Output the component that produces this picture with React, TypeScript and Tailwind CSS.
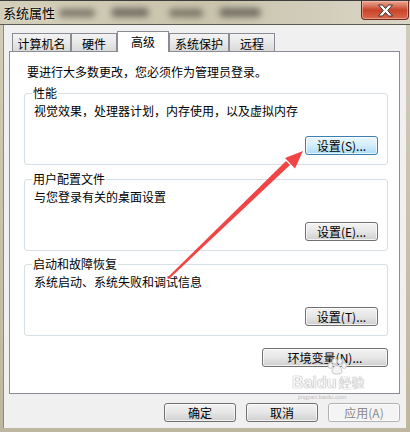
import React from "react";

const FONT = { fontFamily: '"Noto Sans CJK SC", "Noto Sans", sans-serif' };
const MARK = { fontFamily: '"Liberation Sans", "Noto Sans CJK SC", sans-serif' };

type BtnProps = {
  label: string;
  w: string;
  focused?: boolean;
  disabled?: boolean;
};

const Btn = ({ label, w, focused, disabled }: BtnProps) => {
  let look =
    "border-[#707070] bg-linear-to-b from-[#f3f3f3] via-[#e6e6e6] to-[#cfcfcf] text-black";
  if (focused)
    look =
      "border-[#3c7fb1] bg-linear-to-b from-[#ecf7fd] via-[#d3eefb] to-[#a9dbf6] text-black";
  if (disabled) look = "border-[#adb2b5] bg-[#f4f4f4] text-[#8a8a8a]";
  return (
    <div
      className={`${w} flex h-[19px] items-center justify-center rounded-[3px] border text-[12px] leading-none shadow-[inset_0_0_0_1px_rgba(255,255,255,0.7)] ${look}`}
    >
      {label}
    </div>
  );
};

const Group = ({
  title,
  text,
  btn,
  mt,
}: {
  title: string;
  text: string;
  btn: React.ReactNode;
  mt: string;
}) => (
  <fieldset
    className={`${mt} ml-[14px] w-[364px] rounded-[3px] border border-[#d5dfe5] px-[9px] pb-[9px]`}
  >
    <legend className="-ml-[2px] h-[16px] px-[1px] text-[12px] leading-[16px]">
      {title}
    </legend>
    <div className="mt-[2px] h-[16px] text-[12px] leading-[16px]">{text}</div>
    <div className="mt-[17px] flex justify-end">{btn}</div>
  </fieldset>
);

const tabs = [
  { name: "计算机名", w: "w-[59px]" },
  { name: "硬件", w: "w-[46px]" },
  { name: "高级", w: "w-[52px]", active: true },
  { name: "系统保护", w: "w-[60px]" },
  { name: "远程", w: "w-[46px]" },
];

export default function App() {
  return (
    <div
      className="relative flex h-[432px] w-[410px] flex-col overflow-hidden bg-linear-to-b from-[#d2cdb8] to-[#bdb7a0] text-black"
      style={FONT}
    >
      {/* title bar */}
      <div className="flex h-[25px] shrink-0 justify-between border-t border-b border-t-[#3d3d3d] border-b-[#5c5a52] bg-linear-to-r from-[#d4cfba] via-[#c9c3ab] to-[#dad6c8]">
        <div className="flex items-center">
          <span className="pl-[3px] text-[13px] leading-none [text-shadow:0_0_3px_#f4f1e6]">
            系统属性
          </span>
          <span className="ml-[4px] h-[8px] w-[36px] rounded-full bg-[#5f5b50] opacity-75 blur-[3px]" />
          <span className="ml-[16px] h-[9px] w-[38px] rounded-full bg-[#55524a] opacity-75 blur-[3px]" />
          <span className="ml-[20px] h-[8px] w-[34px] rounded-full bg-[#5f5b50] opacity-75 blur-[3px]" />
          <span className="ml-[16px] h-[9px] w-[42px] rounded-full bg-[#55524a] opacity-75 blur-[3px]" />
        </div>
        <div className="mr-[1px] flex h-[19px] w-[48px] items-center justify-center rounded-b-[4px] border border-t-0 border-[#6e2a1e] bg-linear-to-b from-[#e9a894] via-[#c8432a] to-[#d9684c] shadow-[inset_0_0_0_1px_rgba(255,200,180,0.5)]">
          <svg width="17" height="13" viewBox="0 0 17 13">
            <path
              d="M1.5 1 L5.5 1 L8.5 4.5 L11.5 1 L15.5 1 L10.8 6.5 L15.5 12 L11.5 12 L8.5 8.5 L5.5 12 L1.5 12 L6.2 6.5 Z"
              fill="#ffffff"
              stroke="#3f3431"
              strokeWidth="1"
              strokeLinejoin="round"
            />
          </svg>
        </div>
      </div>

      {/* dialog body */}
      <div className="mb-[4px] ml-[3px] mr-[4px] flex flex-1 flex-col border-l border-[#8f8a78] bg-[#f0f0f0]">
        {/* tabs */}
        <div className="flex h-[26px] items-end pl-[8px] pt-[6px]">
          {tabs.map((t) =>
            t.active ? (
              <div
                key={t.name}
                className={`${t.w} relative z-10 -mb-[1px] flex h-[21px] justify-center border border-b-0 border-[#898c95] bg-white pt-[2px] text-[12px] leading-[16px]`}
              >
                {t.name}
              </div>
            ) : (
              <div
                key={t.name}
                className={`${t.w} flex h-[18px] justify-center border border-b-0 border-[#898c95] bg-linear-to-b from-[#f3f3f3] via-[#e9e9e9] to-[#d9d9d9] pt-[2px] text-[12px] leading-[15px]`}
              >
                {t.name}
              </div>
            )
          )}
        </div>

        {/* panel */}
        <div className="ml-[5px] flex h-[343px] w-[391px] flex-col border border-[#898c95] bg-white pt-[12px]">
          <div className="h-[16px] pl-[17px] text-[12px] leading-[16px]">
            要进行大多数更改，您必须作为管理员登录。
          </div>
          <Group
            mt="mt-[5px]"
            title="性能"
            text="视觉效果，处理器计划，内存使用，以及虚拟内存"
            btn={<Btn label="设置(S)..." w="w-[73px]" focused />}
          />
          <Group
            mt="mt-[6px]"
            title="用户配置文件"
            text="与您登录有关的桌面设置"
            btn={<Btn label="设置(E)..." w="w-[73px]" />}
          />
          <Group
            mt="mt-[5px]"
            title="启动和故障恢复"
            text="系统启动、系统失败和调试信息"
            btn={<Btn label="设置(T)..." w="w-[73px]" />}
          />
          <div className="mt-[12px] flex justify-end pr-[11px]">
            <Btn label="环境变量(N)..." w="w-[126px]" />
          </div>
        </div>

        {/* footer buttons */}
        <div className="mt-[9px] flex justify-end gap-[10px] pr-[6px]">
          <Btn label="确定" w="w-[72px]" />
          <Btn label="取消" w="w-[72px]" />
          <Btn label="应用(A)" w="w-[72px]" disabled />
        </div>
      </div>

      {/* watermark */}
      <div
        className="pointer-events-none absolute left-[292px] top-[358px] flex flex-col items-start"
        style={MARK}
      >
        <svg className="ml-[34px]" width="22" height="17" viewBox="0 0 22 18">
          <g fill="#f4f4f4" stroke="#c4c4c4" strokeWidth="1">
            <ellipse cx="4" cy="8" rx="2.5" ry="3" />
            <ellipse cx="8.5" cy="3.5" rx="2.5" ry="3" />
            <ellipse cx="14" cy="3.5" rx="2.5" ry="3" />
            <ellipse cx="18.5" cy="8" rx="2.5" ry="3" />
            <path d="M11 8 C15 8 17 13 16 15.5 C15 17.5 7 17.5 6 15.5 C5 13 7 8 11 8 Z" />
          </g>
        </svg>
        <div className="flex h-[16px] items-end gap-[2px] opacity-80">
          <span className="text-[16px] font-bold leading-[16px] text-[#f2f2f2] [text-shadow:0_0_1px_#8a8a8a,0_0_1px_#8a8a8a]">
            Baidu
          </span>
          <span className="text-[13px] leading-[16px] text-[#f2f2f2] [text-shadow:0_0_1px_#8a8a8a,0_0_1px_#8a8a8a]">
            经验
          </span>
        </div>
        <span className="ml-[6px] mt-[3px] text-[6px] leading-[7px] text-[#bdbdbd]">
          jingyan.baidu.com
        </span>
      </div>

      {/* red annotation arrow */}
      <svg
        className="pointer-events-none absolute inset-0"
        width="410"
        height="432"
        viewBox="0 0 410 432"
      >
        <polygon points="167,278 169,279 290,165 286,161" fill="#ef3b3b" opacity="0.95" />
        <polygon points="303,151 295,168.5 285,158" fill="#ef3b3b" opacity="0.95" />
      </svg>
    </div>
  );
}
